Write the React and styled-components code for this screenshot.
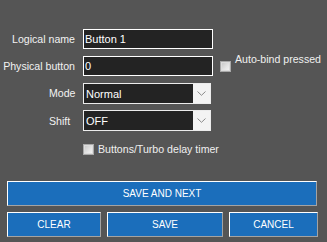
import React from "react";
import styled, { createGlobalStyle } from "styled-components";

const Global = createGlobalStyle`
  html, body {
    margin: 0;
    padding: 0;
    background: #555555;
  }
  body {
    width: 327px;
    height: 242px;
    overflow: hidden;
    font-family: "Liberation Sans", Arial, sans-serif;
  }
`;

const Panel = styled.div`
  width: 327px;
  height: 242px;
  box-sizing: border-box;
  padding-top: 29px;
  background: #555555;
`;

const Form = styled.div`
  display: grid;
  grid-template-columns: 83px 130px auto;
  grid-template-rows: 20px 20px 20px 21px 22px;
  row-gap: 7px;
`;

const Label = styled.div`
  display: flex;
  align-items: center;
  justify-content: ${(p) => (p.$left ? "flex-start" : "flex-end")};
  padding-left: ${(p) => (p.$left ? "49px" : "0")};
  padding-right: ${(p) => (p.$left ? "0" : "8px")};
  color: #f2f2f2;
  font-size: 10.6px;
  white-space: nowrap;
`;

const TextInput = styled.div`
  box-sizing: border-box;
  height: 20px;
  width: 130px;
  border: 1px solid #ffffff;
  background: #232323;
  color: #ffffff;
  font-size: 11px;
  padding-left: 1px;
  display: flex;
  align-items: center;
`;

const Select = styled.div`
  box-sizing: border-box;
  width: 128px;
  height: ${(p) => p.$h}px;
  border: 1px solid #ececec;
  display: flex;
  align-items: stretch;
`;

const SelectValue = styled.div`
  flex: 1;
  background: #232323;
  color: #ffffff;
  font-size: 11px;
  padding-left: 2px;
  display: flex;
  align-items: center;
`;

const SelectArrow = styled.div`
  width: 17px;
  background: #f3f3f3;
  display: flex;
  align-items: center;
  justify-content: center;
`;

const CheckRow = styled.div`
  display: flex;
  align-items: ${(p) => (p.$raised ? "flex-start" : "center")};
  gap: 4px;
  grid-column: ${(p) => p.$col};
  padding-left: ${(p) => p.$pad || 0}px;
  padding-top: ${(p) => p.$top || 0}px;
`;

const Box = styled.span`
  box-sizing: border-box;
  flex: none;
  width: 11px;
  height: 11px;
  border: 1px solid #a9a9a9;
  background: linear-gradient(135deg, #c4c4c4 0%, #e6e6e6 60%, #f6f6f6 100%);
  box-shadow: inset 0 0 0 1px #dcdcdc;
`;

const CheckText = styled.span`
  color: #f0f0f0;
  font-size: 10.6px;
  white-space: nowrap;
  margin-top: ${(p) => p.$shift || 0}px;
`;

const Buttons = styled.div`
  display: flex;
  flex-direction: column;
  gap: 6px;
  margin-top: 21px;
  padding: 0 10px 0 7px;
`;

const ButtonRow = styled.div`
  display: grid;
  grid-template-columns: 94px 116px 89px;
  column-gap: 6px;
`;

const Button = styled.div`
  box-sizing: border-box;
  height: 25px;
  background: #1b6ebb;
  border-top: 1px solid #ffffff;
  border-left: 1px solid #ffffff;
  border-right: 1px solid #a3a3a3;
  border-bottom: 1px solid #a3a3a3;
  color: #ffffff;
  font-size: 10px;
  display: flex;
  align-items: center;
  justify-content: center;
  white-space: nowrap;
`;

const Chevron = () => (
  <svg width="9" height="5" viewBox="0 0 9 5">
    <path d="M0.5 0.5 L4.5 4.3 L8.5 0.5" fill="none" stroke="#8a8a8a" strokeWidth="1" />
  </svg>
);

const Dropdown = ({ value, h }) => (
  <Select $h={h}>
    <SelectValue>{value}</SelectValue>
    <SelectArrow>
      <Chevron />
    </SelectArrow>
  </Select>
);

export default function App() {
  return (
    <>
      <Global />
      <Panel>
        <Form>
          <Label>Logical name</Label>
          <TextInput>Button 1</TextInput>
          <span />

          <Label>Physical button</Label>
          <TextInput>0</TextInput>
          <CheckRow $raised $pad={7} $top={5}>
            <Box />
            <CheckText $shift={-8}>Auto-bind pressed</CheckText>
          </CheckRow>

          <Label $left>Mode</Label>
          <Dropdown value="Normal" h={21} />
          <span />

          <Label $left>Shift</Label>
          <Dropdown value="OFF" h={21} />
          <span />

          <CheckRow $col="2 / span 2">
            <Box />
            <CheckText>Buttons/Turbo delay timer</CheckText>
          </CheckRow>
        </Form>
        <Buttons>
          <Button>SAVE AND NEXT</Button>
          <ButtonRow>
            <Button>CLEAR</Button>
            <Button>SAVE</Button>
            <Button>CANCEL</Button>
          </ButtonRow>
        </Buttons>
      </Panel>
    </>
  );
}
